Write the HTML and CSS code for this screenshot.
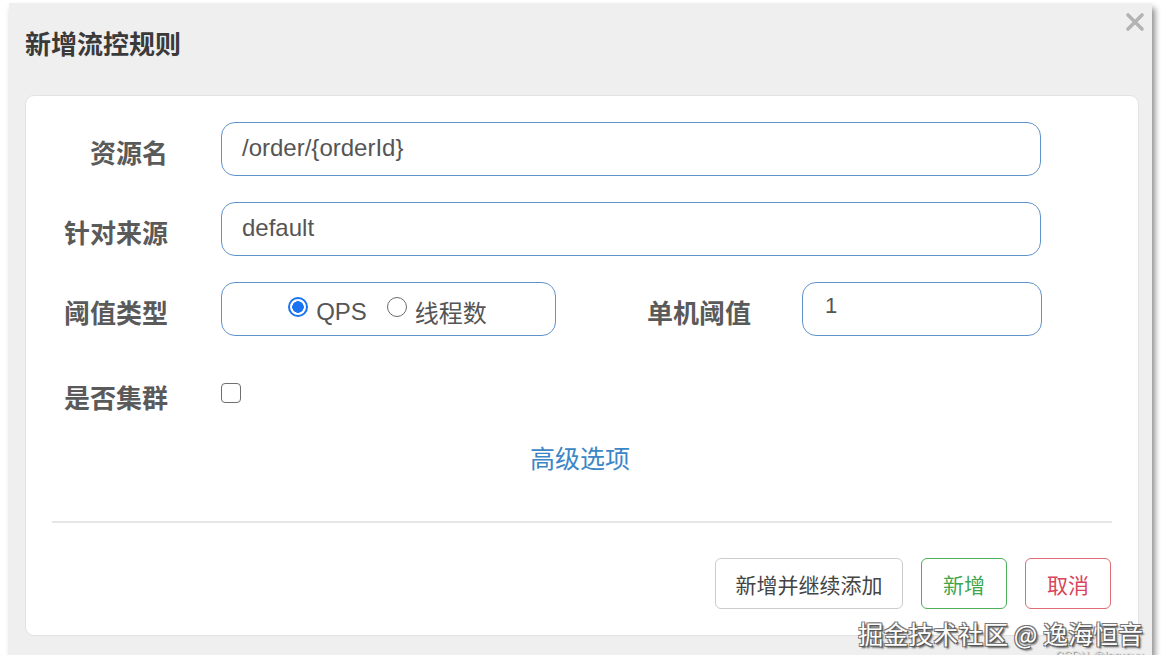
FILE: index.html
```html
<!DOCTYPE html>
<html>
<head>
  <meta charset="UTF-8">
  <title>新增流控规则</title>
  <link rel="stylesheet" href="styles.css">
</head>
<body>
  <div class="dialog">
    <div class="dialog-header">
      <h2 class="dialog-title">新增流控规则</h2>
      <span class="dialog-close">
        <svg width="20" height="20" viewBox="0 0 20 20">
          <path d="M3 3 L17 17 M17 3 L3 17" stroke="#b3b3b3" stroke-width="3.6" stroke-linecap="round"/>
        </svg>
      </span>
    </div>

    <div class="panel">
      <div class="form">
        <div class="form-row">
          <label class="form-label">资源名</label>
          <div class="form-input wide">/order/{orderId}</div>
        </div>
        <div class="form-row">
          <label class="form-label">针对来源</label>
          <div class="form-input wide">default</div>
        </div>
        <div class="form-row">
          <label class="form-label">阈值类型</label>
          <div class="radio-box">
            <span class="radio checked"></span>
            <span class="radio-text latin">QPS</span>
            <span class="radio"></span>
            <span class="radio-text">线程数</span>
          </div>
          <label class="form-label second">单机阈值</label>
          <div class="form-input small">1</div>
        </div>
        <div class="form-row cluster">
          <label class="form-label">是否集群</label>
          <span class="checkbox"></span>
        </div>
      </div>

      <div class="advanced">高级选项</div>

      <hr class="divider">

      <div class="buttons">
        <button class="btn btn-default">新增并继续添加</button>
        <button class="btn btn-add">新增</button>
        <button class="btn btn-cancel">取消</button>
      </div>
    </div>

    <div class="watermark">掘金技术社区 @ 逸海恒音</div>
    <div class="watermark-small">CSDN @lpruoyu</div>
  </div>
</body>
</html>
```

FILE: styles.css
```css
body {
  margin: 0;
  background-color: #ffffff;
  font-family: "Noto Sans CJK SC", "Liberation Sans", sans-serif;
}

.dialog {
  position: relative;
  box-sizing: border-box;
  width: 1143px;
  height: 652px;
  margin: 3px 0 0 9px;
  background-color: #efefef;
  box-shadow: 3px 5px 6px rgba(0, 0, 0, 0.45);
  display: flex;
  flex-direction: column;
}

.dialog-header {
  height: 92px;
  position: relative;
}

.dialog-title {
  margin: 0;
  padding: 21px 0 0 16px;
  font-size: 26px;
  font-weight: bold;
  color: #3a3a3a;
  line-height: 38px;
}

.dialog-close {
  position: absolute;
  top: 9px;
  right: 7px;
}

.panel {
  box-sizing: border-box;
  margin: 0 13px 0 16px;
  height: 541px;
  background-color: #ffffff;
  border: 1px solid #e2e2e2;
  border-radius: 9px;
  padding: 26px 0 0 0;
  display: flex;
  flex-direction: column;
}

.form {
  display: flex;
  flex-direction: column;
  gap: 26px;
}

.form-row {
  display: flex;
  align-items: center;
  height: 54px;
}

.form-row.cluster {
  margin-top: 5px;
}

.form-label {
  width: 142px;
  text-align: right;
  font-size: 26px;
  font-weight: bold;
  color: #5a5a5a;
  margin-right: 53px;
  margin-top: 4px;
}

.form-label.second {
  width: 195px;
  margin-right: 51px;
}

.form-input {
  box-sizing: border-box;
  height: 54px;
  border: 1.5px solid #5f93cc;
  border-radius: 14px;
  padding: 0 20px;
  display: flex;
  align-items: center;
  font-family: "Liberation Sans", sans-serif;
  font-size: 24px;
  color: #555555;
  padding-bottom: 3px;
}

.form-input.wide {
  width: 820px;
}

.form-input.small {
  width: 240px;
  padding-left: 22px;
  padding-bottom: 6px;
  font-size: 22px;
}

.radio-box {
  box-sizing: border-box;
  width: 335px;
  height: 54px;
  border: 1.5px solid #5f93cc;
  border-radius: 14px;
  display: flex;
  align-items: center;
  justify-content: center;
  padding-right: 2px;
}

.radio {
  box-sizing: border-box;
  width: 20px;
  height: 20px;
  border-radius: 50%;
  border: 1.5px solid #6b6b6b;
  background: #ffffff;
  margin-right: 8px;
  margin-bottom: 4px;
}

.radio.checked {
  border: 2px solid #1a73f0;
  background: radial-gradient(circle, #1a73f0 0, #1a73f0 5.5px, #ffffff 6px);
}

.radio-text {
  font-size: 24px;
  color: #555555;
  margin-right: 20px;
  margin-top: 4px;
}

.radio-text.latin {
  font-family: "Liberation Sans", sans-serif;
  margin-top: 6px;
}

.radio-text:last-child {
  margin-right: 0;
}

.checkbox {
  box-sizing: border-box;
  width: 20px;
  height: 20px;
  border: 1.5px solid #6f6f6f;
  border-radius: 4px;
  margin-bottom: 2px;
}

.advanced {
  margin-top: 18px;
  text-align: center;
  font-size: 25px;
  color: #3d86c6;
  line-height: 36px;
  padding-right: 4px;
}

.divider {
  margin: 46px 26px 0 26px;
  border: none;
  border-top: 2px solid #e6e6e6;
}

.buttons {
  display: flex;
  justify-content: flex-end;
  gap: 18px;
  margin: 35px 27px 0 0;
}

.btn {
  box-sizing: border-box;
  height: 51px;
  padding: 0 16px;
  background: #ffffff;
  border-radius: 6px;
  font-family: "Noto Sans CJK SC", sans-serif;
  font-size: 21px;
  cursor: pointer;
}

.btn-default {
  width: 188px;
  border: 1.5px solid #cccccc;
  color: #444444;
}

.btn-add {
  width: 86px;
  border: 1.5px solid #4cae5a;
  color: #3fa64e;
}

.btn-cancel {
  width: 86px;
  border: 1.5px solid #de6b75;
  color: #d9455a;
}

.watermark {
  position: absolute;
  right: 9px;
  bottom: 9px;
  font-size: 25px;
  color: #ffffff;
  line-height: 26px;
  text-shadow: 1px 1px 0 #555, -1px -1px 0 #777, 1px -1px 0 #777, -1px 1px 0 #777, 2px 2px 2px #444;
}

.watermark-small {
  position: absolute;
  right: 8px;
  bottom: -7px;
  font-family: "Liberation Sans", sans-serif;
  font-size: 12px;
  line-height: 12px;
  color: #e0e0e0;
  text-shadow: 1px 1px 0 #999;
}
```
